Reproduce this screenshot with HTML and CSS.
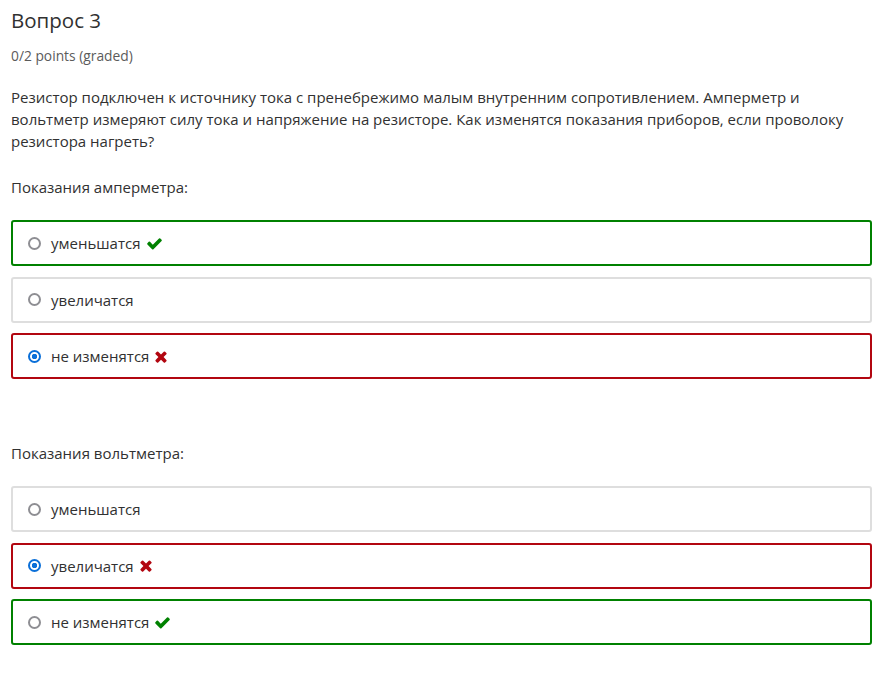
FILE: index.html
```html
<!DOCTYPE html>
<html lang="ru">
<head>
    <meta charset="UTF-8">
    <meta name="viewport" content="width=device-width, initial-scale=1.0">
    <title>Вопрос 3</title>
    <link rel="stylesheet" href="styles.css">
</head>
<body>
    <div class="problem">
        <h3 class="problem-header">Вопрос 3</h3>
        <div class="problem-progress">0/2 points (graded)</div>

        <p class="question">Резистор подключен к источнику тока с пренебрежимо малым внутренним сопротивлением. Амперметр и вольтметр измеряют силу тока и напряжение на резисторе. Как изменятся показания приборов, если проволоку резистора нагреть?</p>

        <div class="choicegroup">
            <p class="group-label">Показания амперметра:</p>
            <label class="choice correct">
                <input type="radio" name="ammeter">
                <span>уменьшатся</span>
                <svg class="icon icon-check" viewBox="0 0 1792 1792"><path d="M1671 566q0 40-28 68l-724 724-136 136q-28 28-68 28t-68-28l-136-136-362-362q-28-28-28-68t28-68l136-136q28-28 68-28t68 28l294 295 656-657q28-28 68-28t68 28l136 136q28 28 28 68z"/></svg>
            </label>
            <label class="choice">
                <input type="radio" name="ammeter">
                <span>увеличатся</span>
            </label>
            <label class="choice incorrect">
                <input type="radio" name="ammeter" checked>
                <span>не изменятся</span>
                <svg class="icon icon-times" viewBox="0 0 1408 1792"><path d="M1298 1322q0 40-28 68l-136 136q-28 28-68 28t-68-28l-294-294-294 294q-28 28-68 28t-68-28l-136-136q-28-28-28-68t28-68l294-294-294-294q-28-28-28-68t28-68l136-136q28-28 68-28t68 28l294 294 294-294q28-28 68-28t68 28l136 136q28 28 28 68t-28 68l-294 294 294 294q28 28 28 68z"/></svg>
            </label>
        </div>

        <div class="choicegroup">
            <p class="group-label">Показания вольтметра:</p>
            <label class="choice">
                <input type="radio" name="voltmeter">
                <span>уменьшатся</span>
            </label>
            <label class="choice incorrect">
                <input type="radio" name="voltmeter" checked>
                <span>увеличатся</span>
                <svg class="icon icon-times" viewBox="0 0 1408 1792"><path d="M1298 1322q0 40-28 68l-136 136q-28 28-68 28t-68-28l-294-294-294 294q-28 28-68 28t-68-28l-136-136q-28-28-28-68t28-68l294-294-294-294q-28-28-28-68t28-68l136-136q28-28 68-28t68 28l294 294 294-294q28-28 68-28t68 28l136 136q28 28 28 68t-28 68l-294 294 294 294q28 28 28 68z"/></svg>
            </label>
            <label class="choice correct">
                <input type="radio" name="voltmeter">
                <span>не изменятся</span>
                <svg class="icon icon-check" viewBox="0 0 1792 1792"><path d="M1671 566q0 40-28 68l-724 724-136 136q-28 28-68 28t-68-28l-136-136-362-362q-28-28-28-68t28-68l136-136q28-28 68-28t68 28l294 295 656-657q28-28 68-28t68 28l136 136q28 28 28 68z"/></svg>
            </label>
        </div>
    </div>
</body>
</html>
```

FILE: styles.css
```css
body {
    font-family: "Open Sans", Arial, sans-serif;
    background-color: #fff;
    color: #313131;
    margin: 0;
    padding: 0;
}
.problem {
    padding: 6px 12px 20px 11px;
}
.problem-header {
    font-size: 20.5px;
    font-weight: normal;
    line-height: 28px;
    margin: 0;
}
.problem-progress {
    font-size: 13.8px;
    color: #5b5b5b;
    margin-top: 13px;
    line-height: 18px;
}
.question {
    font-size: 15px;
    line-height: 22px;
    margin: 21px 0 0;
}
.choicegroup {
    margin-top: 24px;
}
.choicegroup + .choicegroup {
    margin-top: 63px;
}
.group-label {
    font-size: 15px;
    line-height: 22px;
    margin: 0 0 22px;
}
.choice {
    display: flex;
    align-items: center;
    height: 46px;
    box-sizing: border-box;
    margin-bottom: 10.5px;
    padding: 0 15px;
    border: 2px solid #dedede;
    border-radius: 3px;
    font-size: 15px;
    cursor: pointer;
}
.choice.correct {
    border-color: #008100;
}
.choice.incorrect {
    border-color: #b20610;
}
.choice input {
    appearance: none;
    width: 13px;
    height: 13px;
    margin: 0 10px 0 0;
    border: 2px solid #8e8e93;
    border-radius: 50%;
    box-sizing: border-box;
}
.choice input:checked {
    border-color: #0a6fd8;
    background: radial-gradient(circle, #0a6fd8 0 2.5px, #fff 3px);
}
.icon {
    width: 17px;
    height: 17px;
    margin-left: 5px;
}
.icon-check {
    fill: #008100;
}
.icon-times {
    fill: #b20610;
    width: 14px;
}
```
